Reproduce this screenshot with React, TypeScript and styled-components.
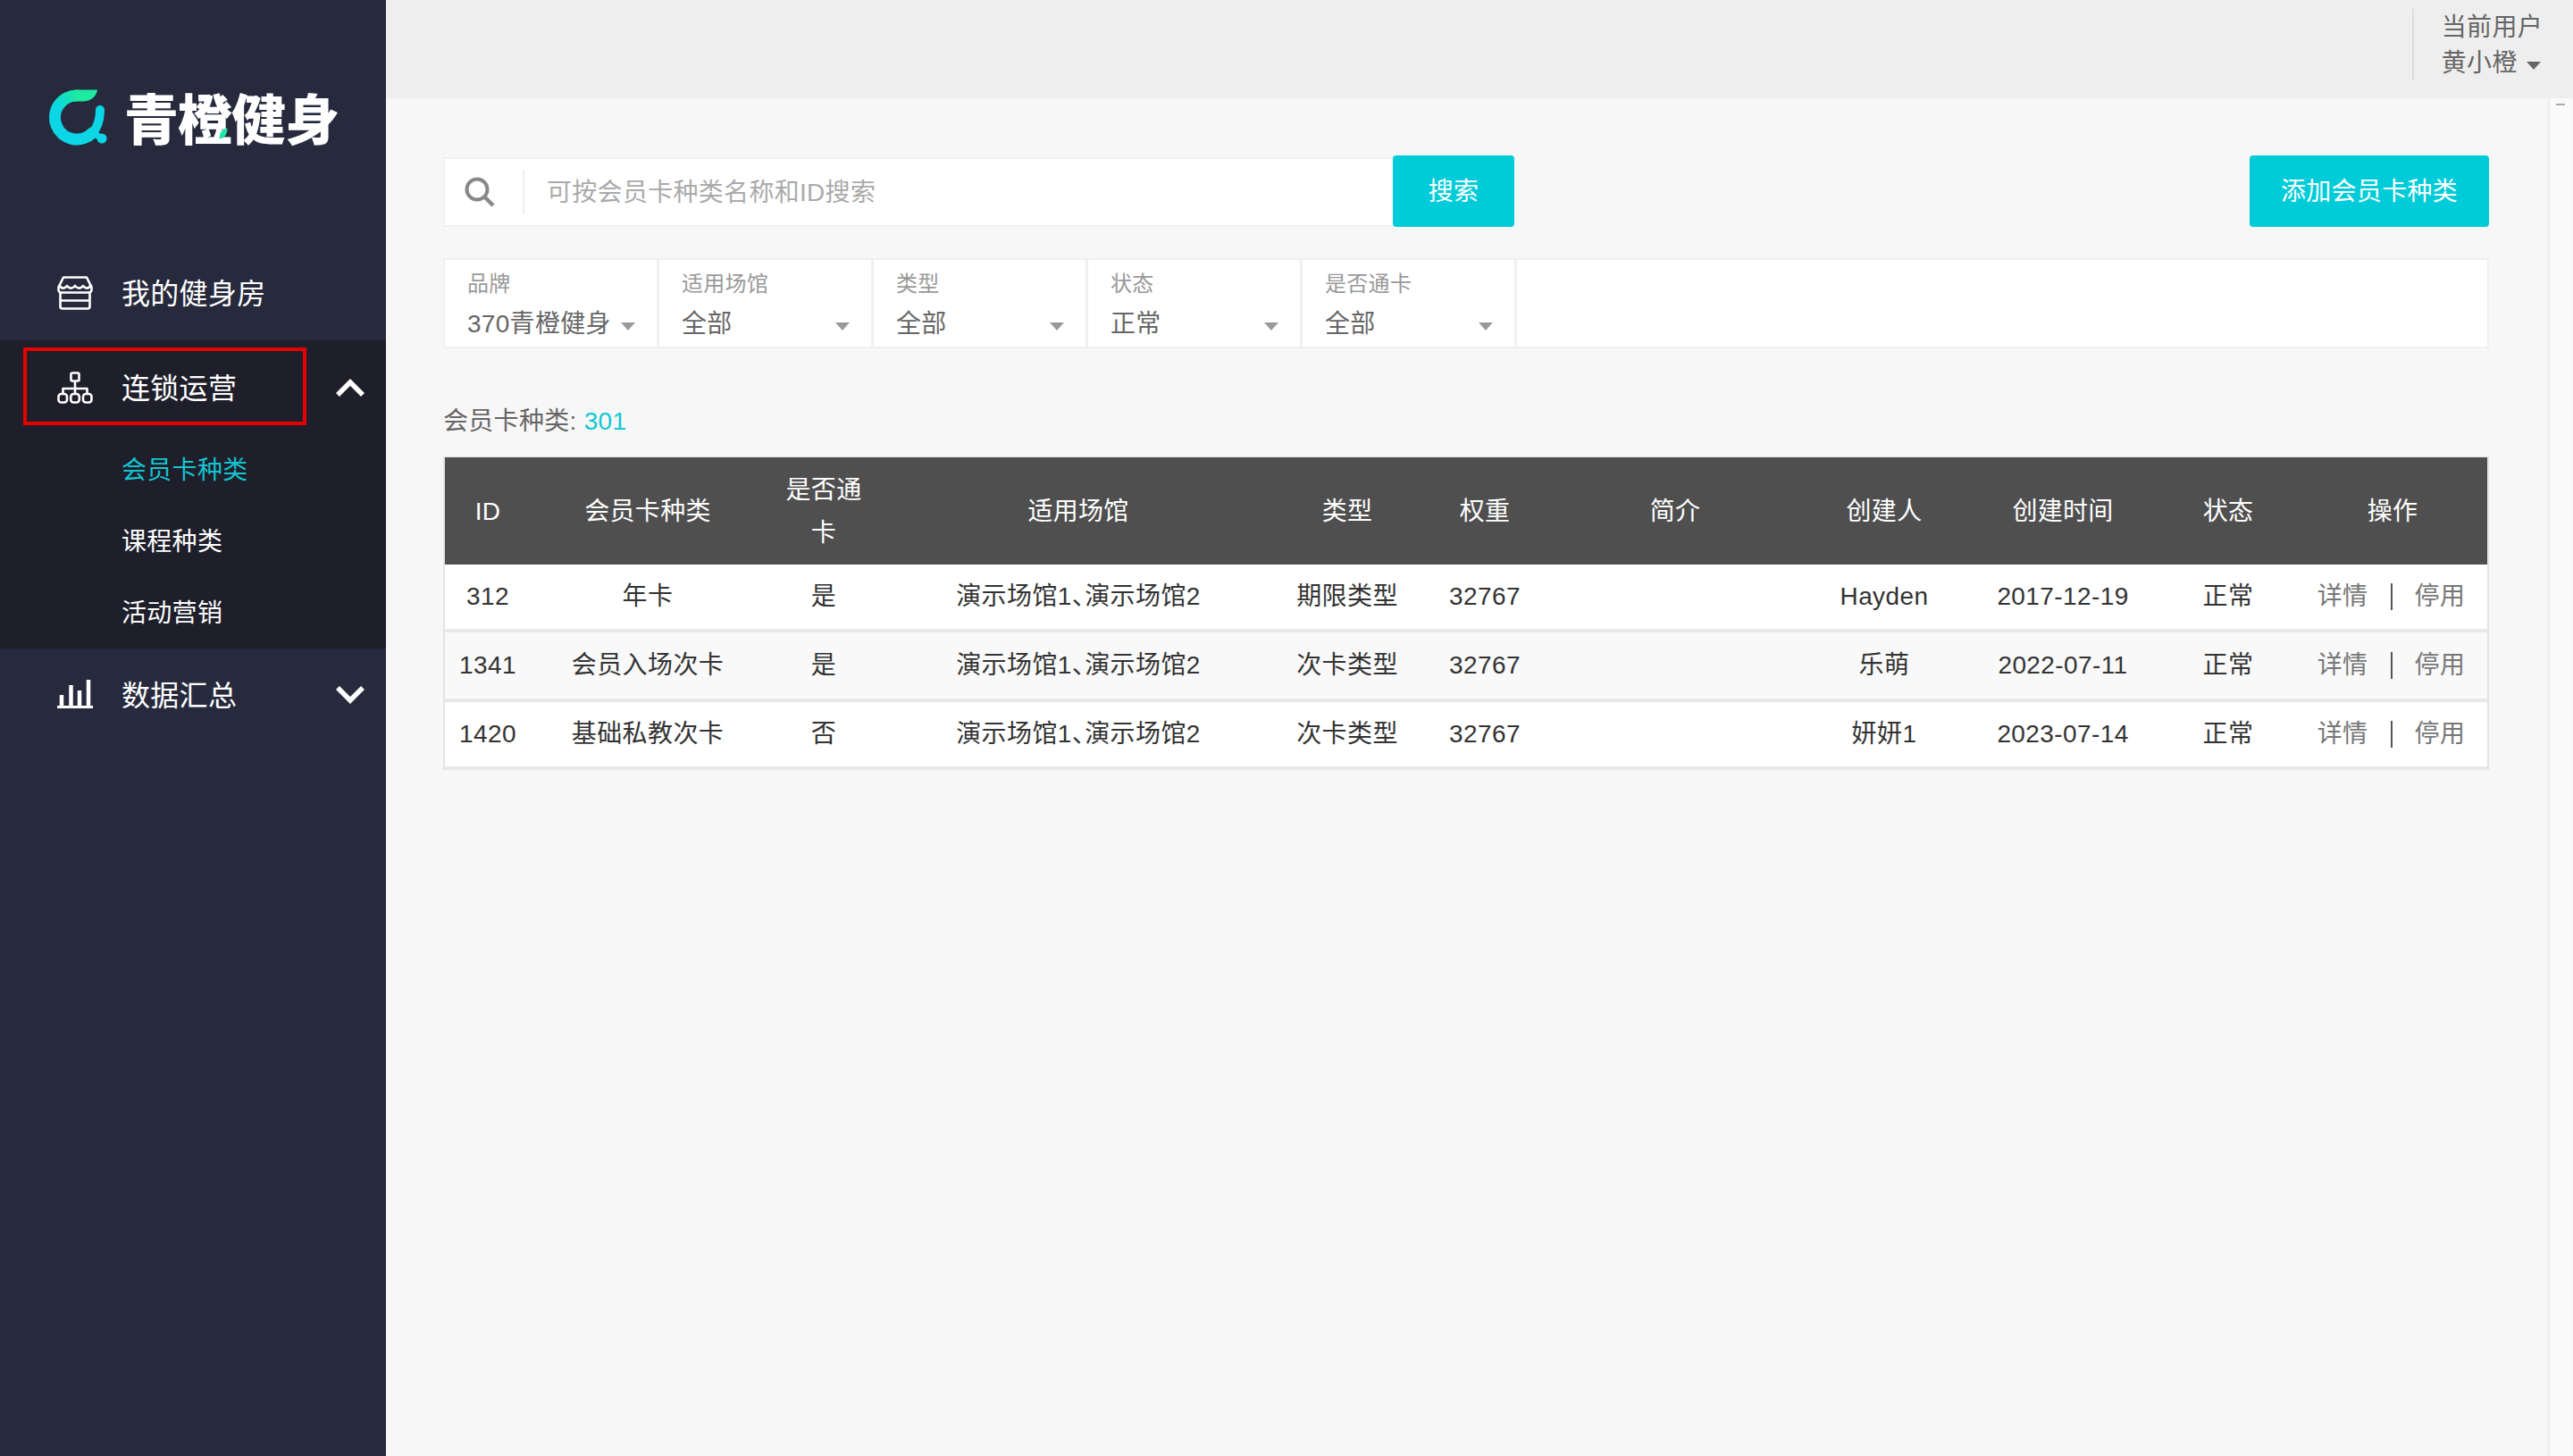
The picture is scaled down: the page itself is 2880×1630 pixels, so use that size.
import React from "react";
import styled, { createGlobalStyle } from "styled-components";

const GlobalStyle = createGlobalStyle`
  html, body {
    margin: 0;
    padding: 0;
    height: 100%;
    background: #f7f7f7;
  }
  body {
    font-family: "Liberation Sans", "Noto Sans CJK SC", sans-serif;
    font-size: 28px;
    line-height: 40px;
    letter-spacing: 0.3px;
    color: #333;
  }
  * {
    box-sizing: border-box;
  }
`;

const Page = styled.div`
  display: flex;
  width: 2880px;
  height: 1630px;
  overflow: hidden;
`;

const Sidebar = styled.aside`
  position: relative;
  flex: 0 0 432px;
  background: #272a3d;
  color: #fff;
`;

const LogoRow = styled.div`
  display: flex;
  align-items: center;
  gap: 15px;
  padding: 99px 0 0 54px;
  height: 165px;
`;

const Wordmark = styled.div`
  position: relative;
  margin-top: -2px;
  font-family: "Noto Sans CJK SC", sans-serif;
  font-size: 61px;
  line-height: 66px;
  font-weight: 900;
  letter-spacing: -1px;
  white-space: nowrap;
`;

const Leaf = styled.svg`
  position: absolute;
  left: 106px;
  top: 45px;
`;

const Menu = styled.nav`
  margin-top: 110px;
`;

const MenuItem = styled.div`
  display: flex;
  align-items: center;
  height: ${(p) => p.$height ?? 106}px;
  padding: 0 24px 0 64px;
  font-size: 32px;
`;

const MenuIcon = styled.span`
  display: flex;
  flex: 0 0 72px;
`;

const MenuLabel = styled.span`
  flex: 1;
  padding-top: 2px;
`;

const MenuGroup = styled.div`
  background: #1e1f2b;
  position: relative;
`;

const SubItem = styled.div`
  display: flex;
  align-items: center;
  height: 80px;
  padding: 2px 0 0 136px;
  font-size: 28px;
  color: ${(p) => (p.$active ? "#14c4cf" : "#fff")};
`;

const Highlight = styled.div`
  position: absolute;
  left: 26px;
  top: 8px;
  width: 317px;
  height: 87px;
  border: 4px solid #e60000;
`;

const Main = styled.main`
  flex: 1;
  display: flex;
  flex-direction: column;
  min-width: 0;
`;

const TopBar = styled.header`
  display: flex;
  justify-content: flex-end;
  flex: 0 0 110px;
  padding: 10px 34px 0 0;
  background: #eee;
`;

const UserBlock = styled.div`
  height: 80px;
  padding: 1px 0 0 31px;
  border-left: 2px solid #ddd;
  color: #666;
`;

const UserName = styled.div`
  display: flex;
  align-items: center;
  gap: 10px;
`;

const Caret = styled.i`
  display: block;
  flex: none;
  margin-top: 4px;
  border-top: 9px solid ${(p) => p.$color ?? "#999"};
  border-left: 8px solid transparent;
  border-right: 8px solid transparent;
`;

const BodyRow = styled.div`
  flex: 1;
  display: flex;
  min-height: 0;
  padding-right: 2px;
`;

const Content = styled.div`
  flex: 1;
  min-width: 0;
  padding: 64px 66px 0 64px;
`;

const ScrollTrack = styled.div`
  flex: 0 0 26px;
  display: flex;
  justify-content: center;
  padding-top: 6px;
  background: #fafafa;
  border-left: 2px solid #eee;
`;

const ScrollArrow = styled.i`
  display: block;
  width: 10px;
  height: 2px;
  background: #aaa;
`;

const Toolbar = styled.div`
  display: flex;
  align-items: flex-end;
  justify-content: space-between;
  height: 80px;
`;

const SearchGroup = styled.div`
  display: flex;
  align-items: flex-end;
`;

const SearchBox = styled.div`
  display: flex;
  align-items: center;
  width: 1063px;
  height: 78px;
  background: #fff;
  border: 2px solid #f1f1f1;
  border-right: 0;
`;

const SearchIconWrap = styled.span`
  display: flex;
  justify-content: center;
  flex: 0 0 89px;
  height: 50px;
  align-items: center;
  padding-right: 10px;
  border-right: 2px solid #eee;
`;

const Placeholder = styled.span`
  margin-left: 25px;
  padding-top: 2px;
  color: #aaa;
`;

const PrimaryButton = styled.button`
  height: 80px;
  width: ${(p) => p.$width}px;
  border: 0;
  border-radius: 4px;
  background: #00ccd9;
  color: #fff;
  font: inherit;
  letter-spacing: inherit;
  padding: 2px 0 0;
`;

const FilterBar = styled.div`
  display: flex;
  height: 101px;
  margin-top: 35px;
  background: #fff;
  border: 2px solid #f0f0f0;
`;

const FilterCell = styled.div`
  flex: 0 0 240px;
  padding: 11px 24px 0 25px;
  border-right: 3px solid #f0f0f0;
`;

const FilterLabel = styled.div`
  font-size: 24px;
  line-height: 32px;
  color: #999;
`;

const FilterValue = styled.div`
  display: flex;
  align-items: center;
  justify-content: space-between;
  margin-top: 9px;
  color: #666;
`;

const CountLine = styled.div`
  margin: 62px 0 19px;
  color: #666;
`;

const CountNumber = styled.span`
  color: #11c8d6;
`;

const Table = styled.table`
  width: 2290px;
  table-layout: fixed;
  border-collapse: separate;
  border-spacing: 0;
  border: 2px solid #e4e4e4;
  border-top-width: 1px;
  border-bottom: 0;
`;

const HeadCell = styled.th`
  height: 120px;
  padding: 13px 23px 11px;
  background: #4f4f4f;
  color: #fff;
  font-weight: normal;
  line-height: 48px;
  text-align: center;
`;

const Cell = styled.td`
  height: ${(p) => (p.$even ? 78 : 76)}px;
  padding: 0 4px;
  background: ${(p) => (p.$even ? "#f9f9f9" : "#fff")};
  border-bottom: 4px solid #e8e8e8;
  color: #333;
  letter-spacing: 0.4px;
  text-align: center;
  white-space: nowrap;
`;

const VenueComma = styled.span`
  font-feature-settings: "halt";
`;

const Actions = styled.div`
  display: flex;
  align-items: center;
  justify-content: center;
  gap: 25px;
  padding-right: 3px;
  color: #777;
`;

const ActionDivider = styled.i`
  display: block;
  width: 2px;
  height: 30px;
  background: #555;
`;

const columns: [string, number][] = [
  ["ID", 96],
  ["会员卡种类", 262],
  ["是否通卡", 132],
  ["适用场馆", 438],
  ["类型", 164],
  ["权重", 144],
  ["简介", 282],
  ["创建人", 186],
  ["创建时间", 214],
  ["状态", 156],
  ["操作", 212],
];

const Venues = () => (
  <>
    演示场馆1<VenueComma>、</VenueComma>演示场馆2
  </>
);

const rows = [
  ["312", "年卡", "是", <Venues />, "期限类型", "32767", "", "Hayden", "2017-12-19", "正常"],
  ["1341", "会员入场次卡", "是", <Venues />, "次卡类型", "32767", "", "乐萌", "2022-07-11", "正常"],
  ["1420", "基础私教次卡", "否", <Venues />, "次卡类型", "32767", "", "妍妍1", "2023-07-14", "正常"],
];

const filters = [
  ["品牌", "370青橙健身"],
  ["适用场馆", "全部"],
  ["类型", "全部"],
  ["状态", "正常"],
  ["是否通卡", "全部"],
];

const LogoMark = () => (
  <svg width="70" height="66" viewBox="0 0 70 66" fill="none">
    <defs>
      <linearGradient id="logoGrad" x1="0.7" y1="0" x2="0.3" y2="0.5">
        <stop offset="0" stopColor="#1de9a0" />
        <stop offset="1" stopColor="#0cd6e6" />
      </linearGradient>
    </defs>
    <path
      d="M32 8A24.500 24.500 0 1 0 49.300 49.800"
      stroke="url(#logoGrad)"
      strokeWidth="13"
      strokeLinecap="round"
    />
    <path d="M49.300 49.800C55 44 58 37 58 24" stroke="#0cd6e6" strokeWidth="10" strokeLinecap="round" />
    <path d="M30 1.500H55C54 8 49 14.500 38 14.500H30Z" fill="#1de9a0" />
    <path d="M49 49L60 56" stroke="#0cd6e6" strokeWidth="7" />
    <circle cx="60" cy="56" r="5.500" fill="#0cd6e6" />
  </svg>
);

const StoreIcon = () => (
  <svg width="40" height="38" viewBox="0 0 40 38" fill="none" stroke="#fff" strokeWidth="2.6" strokeLinejoin="round" strokeLinecap="round">
    <path d="M7 1.500h26l5.500 11v3a3 3 0 0 1-3 3h-31a3 3 0 0 1-3-3v-3z" />
    <path d="M2 11h1c2 3.500 5.500 3.500 8 0 2.500 3.500 6 3.500 9 0 3 3.500 6.500 3.500 9 0 2.500 3.500 6 3.500 8 0h1" />
    <path d="M3.500 18.500v15.500a2.500 2.500 0 0 0 2.500 2.500h28a2.500 2.500 0 0 0 2.500-2.500v-15.500M3.500 27.500h33" />
  </svg>
);

const NetworkIcon = () => (
  <svg width="40" height="36" viewBox="0 0 40 36" fill="none" stroke="#fff" strokeWidth="2.6" strokeLinejoin="round">
    <rect x="15.500" y="1.500" width="9" height="9" rx="1.500" />
    <path d="M20 10.500v15M6.500 25.500v-6.500h27v6.500" />
    <rect x="1.500" y="25" width="9.500" height="9.500" rx="3" />
    <rect x="15.250" y="25" width="9.500" height="9.500" rx="3" />
    <rect x="29" y="25" width="9.500" height="9.500" rx="3" />
  </svg>
);

const ChartIcon = () => (
  <svg width="40" height="34" viewBox="0 0 40 34" fill="none" stroke="#fff">
    <path d="M0 30.500h40" strokeWidth="3" />
    <path d="M5 30V17M15.500 30V6M25 30V12M35 30V0" strokeWidth="4.500" />
  </svg>
);

const Chevron = ({ up }: { up?: boolean }) => (
  <svg width="32" height="20" viewBox="0 0 32 20" fill="none" stroke="#fff" strokeWidth="5.500">
    <path d={up ? "M2 18L16 4L30 18" : "M2 2L16 16L30 2"} />
  </svg>
);

const SearchIcon = () => (
  <svg width="34" height="34" viewBox="0 0 34 34" fill="none" stroke="#888" strokeWidth="4">
    <circle cx="14" cy="14" r="11.500" />
    <path d="M22 22L32 32" strokeWidth="4.500" />
  </svg>
);

export default function App() {
  return (
    <Page>
      <GlobalStyle />
      <Sidebar>
        <LogoRow>
          <LogoMark />
          <Wordmark>
            青橙健身
            <Leaf width="10" height="13" viewBox="0 0 10 13">
              <path d="M9.500 0.500C9.500 6 7 12 0.500 12.500C0.500 6 3 1.500 9.500 0.500Z" fill="#1de9a0" />
            </Leaf>
          </Wordmark>
        </LogoRow>
        <Menu>
          <MenuItem>
            <MenuIcon><StoreIcon /></MenuIcon>
            <MenuLabel>我的健身房</MenuLabel>
          </MenuItem>
          <MenuGroup>
            <Highlight />
            <MenuItem $height={105}>
              <MenuIcon><NetworkIcon /></MenuIcon>
              <MenuLabel>连锁运营</MenuLabel>
              <Chevron up />
            </MenuItem>
            <SubItem $active>会员卡种类</SubItem>
            <SubItem>课程种类</SubItem>
            <SubItem>活动营销</SubItem>
          </MenuGroup>
          <MenuItem $height={104}>
            <MenuIcon><ChartIcon /></MenuIcon>
            <MenuLabel>数据汇总</MenuLabel>
            <Chevron />
          </MenuItem>
        </Menu>
      </Sidebar>
      <Main>
        <TopBar>
          <UserBlock>
            当前用户
            <UserName>
              黄小橙
              <Caret $color="#666" />
            </UserName>
          </UserBlock>
        </TopBar>
        <BodyRow>
          <Content>
            <Toolbar>
              <SearchGroup>
                <SearchBox>
                  <SearchIconWrap><SearchIcon /></SearchIconWrap>
                  <Placeholder>可按会员卡种类名称和ID搜索</Placeholder>
                </SearchBox>
                <PrimaryButton $width={136}>搜索</PrimaryButton>
              </SearchGroup>
              <PrimaryButton $width={268}>添加会员卡种类</PrimaryButton>
            </Toolbar>
            <FilterBar>
              {filters.map(([label, value]) => (
                <FilterCell key={label}>
                  <FilterLabel>{label}</FilterLabel>
                  <FilterValue>
                    {value}
                    <Caret />
                  </FilterValue>
                </FilterCell>
              ))}
            </FilterBar>
            <CountLine>
              会员卡种类: <CountNumber>301</CountNumber>
            </CountLine>
            <Table>
              <colgroup>
                {columns.map(([name, width]) => (
                  <col key={name} width={width} />
                ))}
              </colgroup>
              <thead>
                <tr>
                  {columns.map(([name]) => (
                    <HeadCell key={name}>{name}</HeadCell>
                  ))}
                </tr>
              </thead>
              <tbody>
                {rows.map((row, i) => (
                  <tr key={i}>
                    {row.map((value, j) => (
                      <Cell key={j} $even={i === 1}>{value}</Cell>
                    ))}
                    <Cell $even={i === 1}>
                      <Actions>
                        详情
                        <ActionDivider />
                        停用
                      </Actions>
                    </Cell>
                  </tr>
                ))}
              </tbody>
            </Table>
          </Content>
          <ScrollTrack>
            <ScrollArrow />
          </ScrollTrack>
        </BodyRow>
      </Main>
    </Page>
  );
}
